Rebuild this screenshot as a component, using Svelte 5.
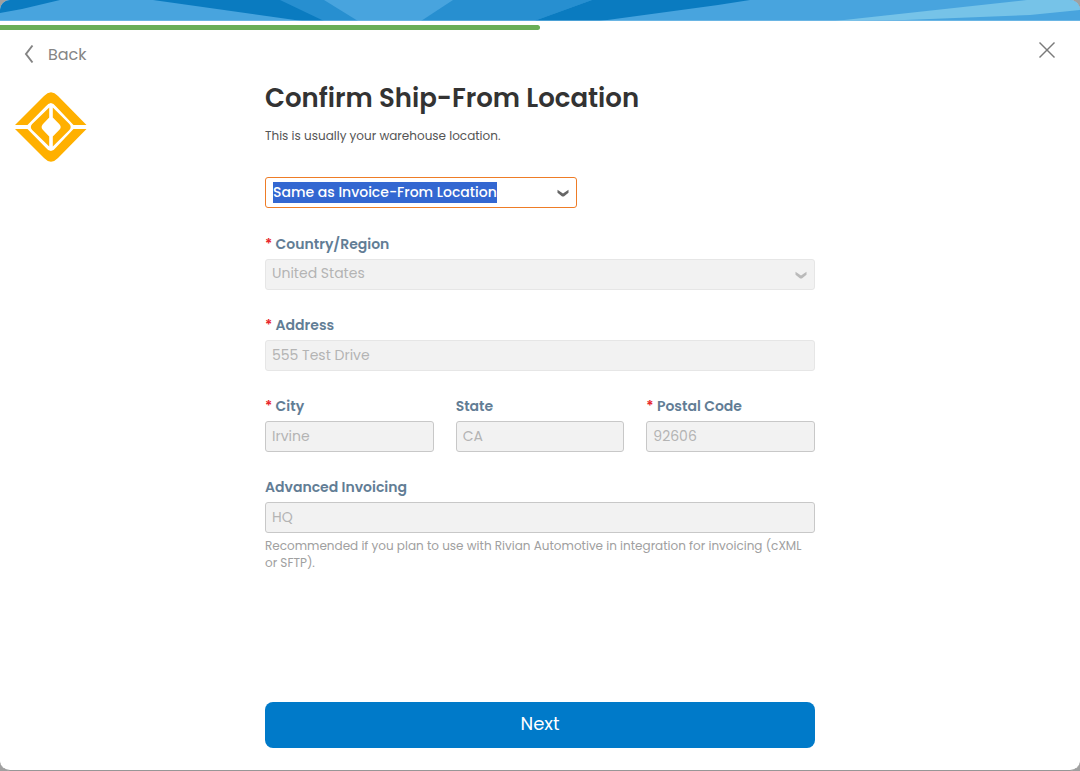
<script lang="ts">
	type Field = {
		id: string;
		label: string;
		value: string;
		required: boolean;
	};

	let progress = $state(50);
	let location = $state('same');
	let country = $state('us');

	const cityFields: Field[] = [
		{ id: 'city', label: 'City', value: 'Irvine', required: true },
		{ id: 'state', label: 'State', value: 'CA', required: false },
		{ id: 'postal', label: 'Postal Code', value: '92606', required: true }
	];
</script>

{#snippet chevron()}
	<svg class="chevron" width="12" height="8" viewBox="0 0 12 8" aria-hidden="true">
		<path d="M0.5 0.8 L6 4.4 L11.5 0.8 V3.8 L7.2 7.2 Q6 8 4.8 7.2 L0.5 3.8 Z" fill="currentColor" />
	</svg>
{/snippet}

{#snippet fieldLabel(id: string, text: string, required: boolean)}
	<label for={id}>
		{#if required}<span class="required">*</span>{/if}
		{text}
	</label>
{/snippet}

<div class="modal">
	<svg class="banner" viewBox="0 0 1080 21" preserveAspectRatio="none" aria-hidden="true">
		<rect width="1080" height="21" fill="#48a4de" />
		<polygon points="0,0 60,0 22,9 0,13" fill="#0a7bc0" />
		<polygon points="153,0 284,0 326,21 302,21" fill="#0a7bc0" />
		<polygon points="280,0 324,0 358,21 324,21" fill="#278fd0" />
		<polygon points="453,0 592,0 534,21 421,21" fill="#278fd0" />
		<polygon points="592,0 750,0 718,5 600,21 534,21" fill="#0a7bc0" />
		<polygon points="1027,0 1080,0 1080,10 1030,15 905,20 835,21" fill="#76c3e8" />
		<rect y="20" width="1080" height="1" fill="#8cc6ea" fill-opacity="0.5" />
	</svg>

	<div class="progress">
		<div class="progress-bar" style="width: {progress}%"></div>
	</div>

	<header class="topbar">
		<button class="back" type="button">
			<svg width="10" height="20" viewBox="0 0 10 20" fill="none" stroke="currentColor" stroke-width="2" aria-hidden="true">
				<polyline points="8.5 1.5 2 10 8.5 18.5"></polyline>
			</svg>
			Back
		</button>
		<button class="close" type="button" aria-label="Close">
			<svg width="16" height="16" viewBox="0 0 16 16" stroke="currentColor" stroke-width="1.4" aria-hidden="true">
				<line x1="0.5" y1="0.5" x2="15.5" y2="15.5"></line>
				<line x1="15.5" y1="0.5" x2="0.5" y2="15.5"></line>
			</svg>
		</button>
	</header>

	<main>
		<svg class="logo" width="72" height="70" viewBox="0 0 72 70" aria-hidden="true">
			<g fill="#ffb000">
				<path d="M0 33 L29 4 Q36 -3.4 43 4 L71.5 33 H58.5 L41 14.5 Q36 7.5 30.6 14.5 L12.5 33 Z" />
				<path d="M0 37 L29 66 Q36 73.4 43 66 L71.5 37 H58.5 L41 55.5 Q36 62.5 30.6 55.5 L12.5 37 Z" />
				<path d="M34.2 15.5 V25.6 L27.8 32.2 Q25.4 35 27.8 37.8 L34.2 44.4 V54.5 L17.2 38 Q14.4 35 17.2 32 Z" />
				<path d="M37.8 15.5 V25.6 L44.4 32.2 Q47 35 44.4 37.8 L37.8 44.4 V54.5 L54.4 38 Q57 35 54.4 32 Z" />
			</g>
		</svg>

		<form>
			<h1>Confirm Ship-From Location</h1>
			<p class="intro">This is usually your warehouse location.</p>

			<div class="combo">
				<select aria-label="Ship-from location" bind:value={location}>
					<option value="same">Same as Invoice-From Location</option>
				</select>
				{@render chevron()}
			</div>

			<div class="field">
				{@render fieldLabel('country', 'Country/Region', true)}
				<div class="select-wrap">
					<select id="country" class="control soft" bind:value={country} disabled>
						<option value="us">United States</option>
					</select>
					{@render chevron()}
				</div>
			</div>

			<div class="field">
				{@render fieldLabel('address', 'Address', true)}
				<input id="address" class="control soft" type="text" value="555 Test Drive" disabled />
			</div>

			<div class="row">
				{#each cityFields as field (field.id)}
					<div class="field">
						{@render fieldLabel(field.id, field.label, field.required)}
						<input id={field.id} class="control" type="text" value={field.value} disabled />
					</div>
				{/each}
			</div>

			<div class="field">
				{@render fieldLabel('invoicing', 'Advanced Invoicing', false)}
				<input id="invoicing" class="control" type="text" value="HQ" disabled aria-describedby="invoicing-hint" />
				<p id="invoicing-hint" class="hint">
					Recommended if you plan to use with Rivian Automotive in integration for invoicing (cXML or SFTP).
				</p>
			</div>

			<button class="next" type="button">Next</button>
		</form>
	</main>
</div>

<style>
	:global(body) {
		background: #a0a0a0;
	}

	.modal {
		display: flex;
		flex-direction: column;
		box-sizing: border-box;
		min-height: 100vh;
		border-bottom: 1px solid #979797;
		border-radius: 10px;
		overflow: hidden;
		background: #fff;
		font-family: Poppins, Inter, sans-serif;
		color: #333;
	}

	.banner {
		display: block;
		width: 100%;
		height: 21px;
	}

	.progress {
		margin-top: 4px;
	}

	.progress-bar {
		height: 5px;
		border-radius: 0 3px 3px 0;
		background: #6aae57;
	}

	.topbar {
		display: flex;
		align-items: flex-start;
		justify-content: space-between;
		padding: 12px 25px 0 24px;
	}

	.topbar button {
		display: flex;
		align-items: center;
		padding: 0;
		border: 0;
		background: none;
		color: #7a7a7a;
		cursor: pointer;
	}

	.topbar .back {
		gap: 14px;
		height: 24px;
		font-family: inherit;
		font-size: 16px;
		color: #858585;
	}

	.close {
		height: 16px;
	}

	main {
		flex: 1;
		display: grid;
		grid-template-columns: 1fr minmax(0, 550px) 1fr;
		padding-top: 14px;
	}

	.logo {
		margin: 12px 0 0 15px;
	}

	form {
		display: flex;
		flex-direction: column;
		padding-bottom: 22px;
	}

	h1 {
		margin: 0;
		font-size: 26px;
		line-height: 36px;
		font-weight: 600;
	}

	.intro {
		margin: 10px 0 31px;
		font-size: 12px;
		line-height: 20px;
		color: #555;
	}

	.combo {
		display: flex;
		align-items: center;
		justify-content: space-between;
		box-sizing: border-box;
		width: 312px;
		max-width: 100%;
		height: 31px;
		margin-bottom: 25px;
		padding: 0 7px;
		border: 1px solid #ee7c26;
		border-radius: 3px;
		color: #666;
	}

	.combo select {
		appearance: none;
		field-sizing: content;
		height: 21px;
		padding: 0 0 2px;
		border: 0;
		border-radius: 0;
		outline: 0;
		background: #3367d1;
		color: #fff;
		font-family: inherit;
		font-size: 14px;
		font-weight: 500;
	}

	.field {
		margin-bottom: 24px;
	}

	label {
		display: block;
		margin-bottom: 4px;
		font-size: 14px;
		line-height: 22px;
		font-weight: 600;
		color: #627d95;
	}

	.required {
		color: #e8252b;
	}

	.control {
		display: block;
		appearance: none;
		box-sizing: border-box;
		width: 100%;
		height: 31px;
		padding: 0 6px;
		border: 1px solid #c8c8c8;
		border-radius: 3px;
		background: #f2f2f2;
		color: #b4b4b4;
		font-family: inherit;
		font-size: 14px;
		opacity: 1;
	}

	.soft {
		border-color: #e6e6e6;
	}

	.select-wrap {
		display: grid;
		align-items: center;
		color: #bababa;
	}

	.select-wrap > :global(*) {
		grid-area: 1 / 1;
	}

	.select-wrap .control {
		padding-bottom: 3px;
	}

	.select-wrap .chevron {
		justify-self: end;
		margin-right: 8px;
		pointer-events: none;
	}

	.row {
		display: grid;
		grid-template-columns: repeat(3, minmax(0, 1fr));
		column-gap: 22px;
	}

	.hint {
		margin: 4px 0 0;
		font-size: 12px;
		line-height: 17px;
		color: #a0a0a0;
	}

	.next {
		height: 46px;
		margin-top: auto;
		padding: 0 0 3px;
		border: 0;
		border-radius: 8px;
		background: #007ac9;
		color: #fff;
		font-family: inherit;
		font-size: 18px;
		cursor: pointer;
	}
</style>
